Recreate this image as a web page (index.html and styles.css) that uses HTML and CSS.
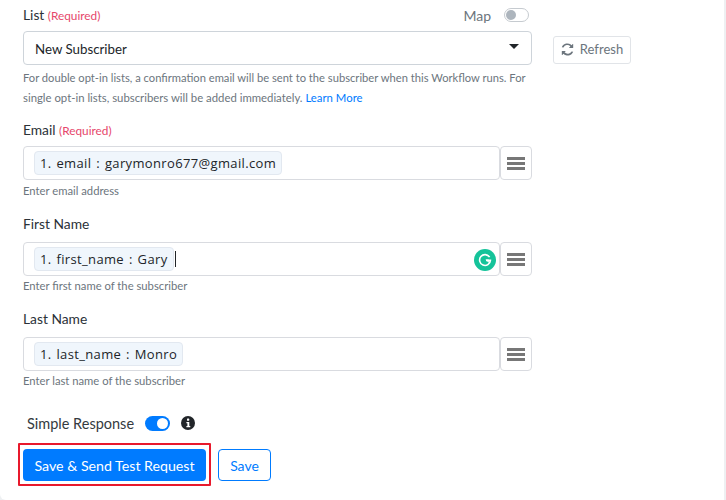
FILE: index.html
```html
<!DOCTYPE html>
<html lang="en">
<head>
<meta charset="utf-8">
<title>Subscriber form</title>
<link rel="stylesheet" href="styles.css">
</head>
<body>
<div class="page">
  <section class="field list-field">
    <div class="label-row">
      <label class="label">List <span class="req">(Required)</span></label>
      <div class="map"><span>Map</span><span class="toggle-off"><i></i></span></div>
    </div>
    <div class="select-row">
      <div class="select"><span>New Subscriber</span><i class="caret"></i></div>
      <button class="refresh"><svg width="13" height="13" viewBox="0 0 512 512"><path fill="#6c757d" d="M370.7 133.3A168 168 0 0 0 96 176l-64-12A232 232 0 0 1 416 88l44-44c8-8 20-2 20 8v136c0 7-5 12-12 12H332c-11 0-16-13-8-20zM32 312h136c11 0 16 13 8 20l-35 35A168 168 0 0 0 416 336l64 12A232 232 0 0 1 96 424l-44 44c-8 8-20 2-20-8V324c0-7 5-12 12-12z"/></svg>Refresh</button>
    </div>
    <p class="help wide">For double opt-in lists, a confirmation email will be sent to the subscriber when this Workflow runs. For<br><span class="second">single opt-in lists, subscribers will be added immediately. <a>Learn More</a></span></p>
  </section>

  <section class="field email-field">
    <label class="label">Email <span class="req">(Required)</span></label>
    <div class="input-row">
      <div class="input"><span class="tag">1. email : garymonro677@gmail.com</span></div>
      <button class="menu"><i></i><i></i><i></i></button>
    </div>
    <p class="help">Enter email address</p>
  </section>

  <section class="field first-field">
    <label class="label">First Name</label>
    <div class="input-row">
      <div class="input"><span class="tag">1. first_name : Gary</span><i class="cursor"></i>
        <span class="grammarly"><svg width="14" height="14" viewBox="0 0 14 14"><path fill="none" stroke="#fff" stroke-width="1.6" d="M11.6 4.2A5.4 5.4 0 1 0 12.4 7.4H8"/><path fill="#fff" d="M7.4 6.6h3.4v3.2z"/></svg></span>
      </div>
      <button class="menu"><i></i><i></i><i></i></button>
    </div>
    <p class="help">Enter first name of the subscriber</p>
  </section>

  <section class="field last-field">
    <label class="label">Last Name</label>
    <div class="input-row">
      <div class="input"><span class="tag">1. last_name : Monro</span></div>
      <button class="menu"><i></i><i></i><i></i></button>
    </div>
    <p class="help">Enter last name of the subscriber</p>
  </section>

  <div class="simple">
    <span>Simple Response</span>
    <span class="toggle-on"><i></i></span>
    <svg width="14" height="14" viewBox="0 0 14 14"><circle cx="7" cy="7" r="7" fill="#212529"/><rect x="6" y="2.6" width="2.2" height="2.2" rx=".6" fill="#fff"/><path fill="#fff" d="M5.4 6h2.9v4h1v1.3H5.4V10h1V7.2h-1z"/></svg>
  </div>

  <div class="actions">
    <div class="highlight"><button class="primary">Save &amp; Send Test Request</button></div>
    <button class="outline">Save</button>
  </div>
</div>
</body>
</html>
```
FILE: styles.css
```css
* { box-sizing: border-box; }
html, body { margin: 0; height: 500px; overflow: hidden; background: #eef0f2; }
body { font-family: "Lato", "Liberation Sans", sans-serif; color: #212529; }
.page { padding: 4px 0 0 23px; width: 724px; height: 500px; background: #fff; border-bottom-left-radius: 6px; }
.field { width: 509px; }
.label { font-size: 13.8px; line-height: 22px; display: block; color: #2b3138; }
.req { font-size: 11.8px; color: #e6476b; }
.label-row { display: flex; justify-content: space-between; align-items: center; height: 22px; }
.map { display: flex; align-items: center; gap: 13px; font-size: 14px; color: #6c757d; margin-right: 3px; }
.toggle-off { width: 25px; height: 14px; border: 1px solid #c6cbd0; border-radius: 7px; padding: 1px; display: block; }
.toggle-off i { display: block; width: 10px; height: 10px; border-radius: 50%; background: #adb5bd; }
.select-row { display: flex; margin-top: 5px; width: 608px; }
.select { width: 509px; height: 34px; border: 1px solid #ced4da; border-radius: 4px; display: flex; align-items: center; justify-content: space-between; padding: 2px 12px 0 11px; font-size: 13.3px; color: #212529; }
.caret { width: 0; height: 0; border-left: 5px solid transparent; border-right: 5px solid transparent; border-top: 5px solid #212529; margin-bottom: 5px; }
.refresh { margin: 5px 0 0 21px; width: 78px; height: 28px; background: #fff; border: 1px solid #e1e4e8; border-radius: 3px; display: flex; align-items: center; justify-content: center; gap: 6px; font: 13px "Lato", sans-serif; color: #6c757d; padding: 0 0 2px; }
.help { margin: 0; font-size: 11.25px; line-height: 20px; color: #6c757d; white-space: nowrap; }
.help a { color: #007bff; }
.wide { margin-top: 3px; font-size: 11.18px; }
.second { font-size: 11.35px; }
.email-field { margin-top: 11px; }
.email-field .help { margin-top: 1px; }
.first-field { margin-top: 12px; }
.last-field { margin-top: 12px; }
.input-row { display: flex; margin-top: 7px; }
.email-field .input-row { margin-top: 4px; }
.input { flex: 1; height: 34px; border: 1px solid #d9dbe0; border-radius: 4px; display: flex; align-items: center; padding-left: 10px; position: relative; }
.tag { font-family: "Open Sans", sans-serif; font-size: 13px; line-height: 22px; padding: 0 5px; background: #f0f6fc; border: 1px solid #e2e8f0; border-radius: 4px; color: #212529; letter-spacing: .35px; word-spacing: 1.2px; white-space: nowrap; }
.cursor { width: 1px; height: 16px; background: #212529; margin-left: 1px; }
.grammarly { position: absolute; right: 3px; top: 6px; width: 22px; height: 22px; border-radius: 50%; background: #15c39a; display: flex; align-items: center; justify-content: center; }
.menu { width: 32px; height: 34px; background: #fff; border: 1px solid #d9dbe0; border-radius: 4px; display: flex; flex-direction: column; align-items: center; justify-content: center; gap: 2px; padding: 0; }
.menu i { display: block; width: 18px; height: 3px; background: #777; }
.simple { display: flex; align-items: center; margin: 22px 0 0 4px; font-size: 14.5px; color: #343a40; height: 20px; }
.toggle-on { width: 25px; height: 15px; border-radius: 8px; background: #007bff; margin: 0 11px; display: flex; justify-content: flex-end; align-items: center; padding-right: 2px; }
.toggle-on i { display: block; width: 11px; height: 11px; border-radius: 50%; background: #fff; }
.actions { display: flex; align-items: flex-start; margin: 10px 0 0 -5px; gap: 7px; }
.highlight { border: 2px solid #e8192c; padding: 4px 3px 3px; border-radius: 1px; }
.primary { width: 183px; height: 32px; background: #007bff; color: #fff; border: 0; border-radius: 4px; font: 14.2px "Lato", sans-serif; padding: 0; display: block; }
.outline { width: 53px; height: 32px; margin-top: 6px; background: #fff; color: #007bff; border: 1px solid #007bff; border-radius: 4px; font: 14px "Lato", sans-serif; padding: 0; }
```
